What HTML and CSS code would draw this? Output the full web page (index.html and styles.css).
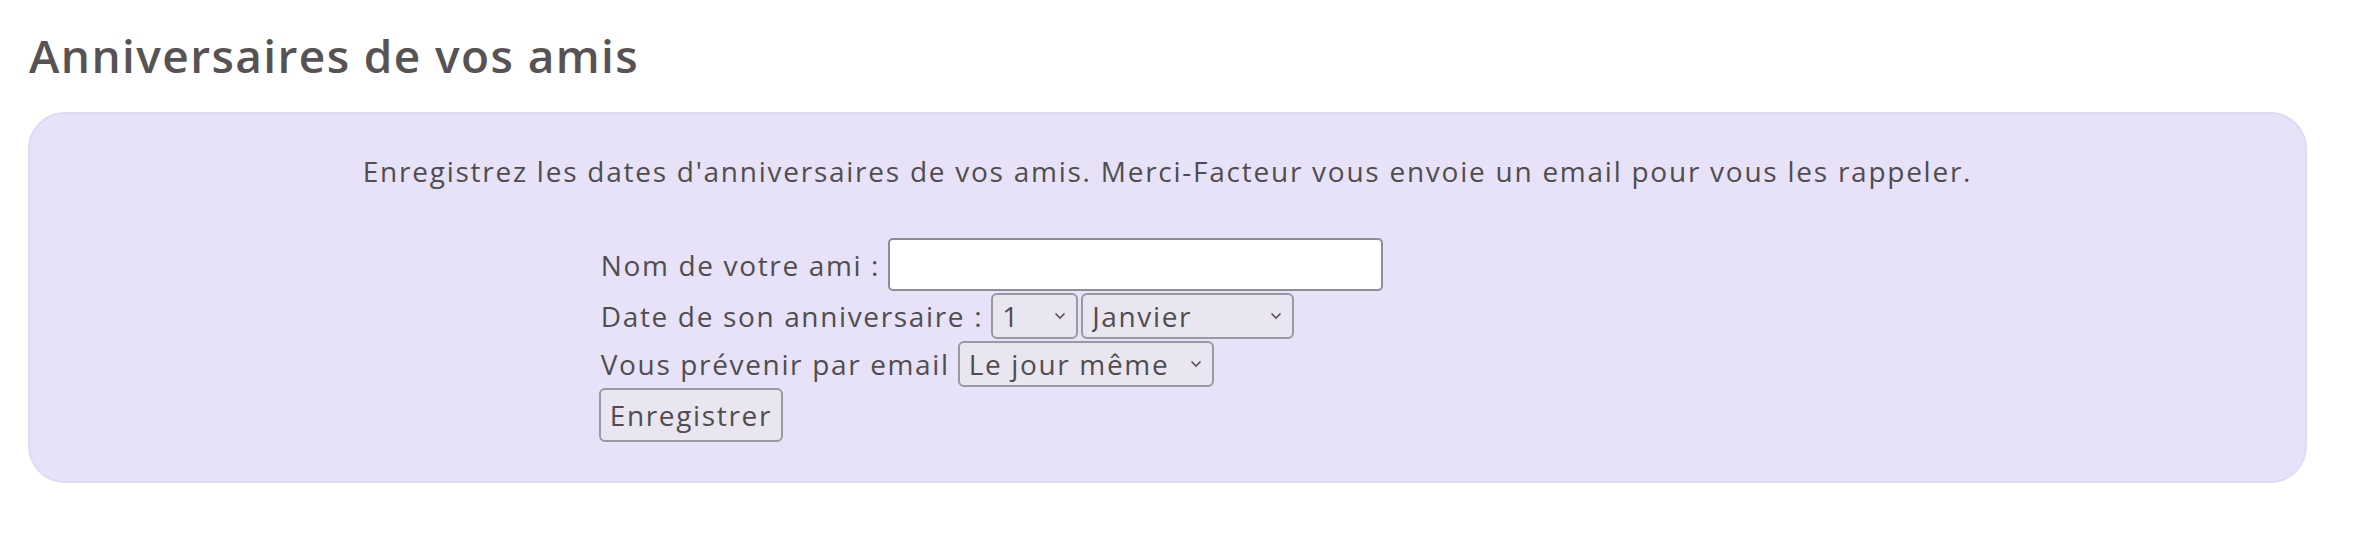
FILE: index.html
```html
<!DOCTYPE html>
<html lang="fr">
<head>
<meta charset="utf-8">
<title>Anniversaires de vos amis</title>
<link rel="stylesheet" href="styles.css">
</head>
<body>
<div class="page">
  <h1 class="title">Anniversaires de vos amis</h1>
  <div class="panel">
    <p class="intro">Enregistrez les dates d'anniversaires de vos amis. Merci-Facteur vous envoie un email pour vous les rappeler.</p>
    <form class="form">
      <div class="row row-first">
        <label class="label" for="nom">Nom de votre ami :</label>
        <input class="text-input" id="nom" type="text">
      </div>
      <div class="row">
        <label class="label" for="jour">Date de son anniversaire :</label>
        <span class="pair">
          <select class="select sel-day" id="jour">
            <option>1</option><option>2</option><option>3</option><option>31</option>
          </select>
          <select class="select sel-month">
            <option>Janvier</option><option>Février</option><option>Septembre</option>
          </select>
        </span>
      </div>
      <div class="row">
        <label class="label" for="quand">Vous prévenir par email</label>
        <select class="select sel-when" id="quand">
          <option>Le jour même</option><option>La veille</option>
        </select>
      </div>
      <div class="row row-last">
        <button class="button" type="button">Enregistrer</button>
      </div>
    </form>
  </div>
</div>
</body>
</html>
```
FILE: styles.css
```css
html, body {
  margin: 0;
  padding: 0;
  background: #ffffff;
}

body {
  font-family: "Open Sans", "Noto Sans", sans-serif;
  color: #514d4f;
}

.page {
  padding: 0 55px 40px 28px;
}

.title {
  margin: 0;
  padding-top: 24px;
  font-size: 46px;
  font-weight: 600;
  line-height: 63px;
  color: #575354;
  letter-spacing: 1.4px;
  padding-left: 1px;
}

.panel {
  margin-top: 25px;
  background: #e7e2f8;
  border: 2px solid #dfdaf5;
  border-radius: 37px;
  padding: 36px 0 39px;
}

.intro {
  margin: 0;
  font-size: 28px;
  line-height: 42px;
  text-align: center;
  letter-spacing: 1.75px;
}

.form {
  width: 50%;
  margin: 45px auto 0;
  font-size: 28px;
  letter-spacing: 1.65px;
}

.row {
  display: flex;
  align-items: center;
  gap: 8px;
  height: 48px;
}

.row-first {
  height: 55px;
}

.row-last {
  height: 54px;
}

.label {
  padding-left: 2px;
  white-space: nowrap;
}

.pair {
  display: flex;
  gap: 3px;
}

.text-input {
  box-sizing: border-box;
  width: 495px;
  height: 53px;
  border: 2px solid #8e8c94;
  border-radius: 5px;
  background: #ffffff;
  padding: 0 10px;
  font: inherit;
}

.select {
  -webkit-appearance: none;
  appearance: none;
  box-sizing: border-box;
  height: 46px;
  border: 2px solid #9a98a0;
  border-radius: 6px;
  background-color: #e9e6f1;
  background-image: url("data:image/svg+xml,%3Csvg xmlns='http://www.w3.org/2000/svg' width='12' height='8' viewBox='0 0 12 8'%3E%3Cpath d='M1.5 1.5 L6 6 L10.5 1.5' fill='none' stroke='%23555153' stroke-width='1.6'/%3E%3C/svg%3E");
  background-repeat: no-repeat;
  background-position: right 10px center;
  background-size: 12px 8px;
  padding: 0 28px 0 9px;
  font: inherit;
  letter-spacing: inherit;
  color: #514d4f;
}

.sel-day {
  width: 87px;
}

.sel-month {
  width: 213px;
}

.sel-when {
  width: 256px;
}

.button {
  box-sizing: border-box;
  height: 54px;
  border: 2px solid #9a98a0;
  border-radius: 6px;
  background: #e9e6f1;
  padding: 0 9px;
  font: inherit;
  letter-spacing: inherit;
  color: #514d4f;
}
```
